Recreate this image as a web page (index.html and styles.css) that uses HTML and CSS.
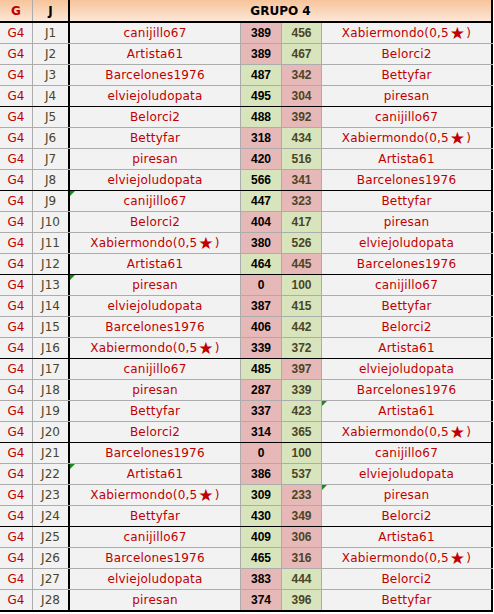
FILE: index.html
```html
<!DOCTYPE html>
<html>
<head>
<meta charset="utf-8">
<link rel="stylesheet" href="styles.css">
</head>
<body>
<div class="sheet">
  <div class="row head">
    <div class="c g hg">G</div>
    <div class="c j hj">J</div>
    <div class="c title">GRUPO 4</div>
  </div>

  <div class="row"><div class="c g">G4</div><div class="c j">J1</div><div class="c p">canijillo67</div><div class="c s1 lo">389</div><div class="c s2 hi">456</div><div class="c p2">Xabiermondo(0,5<span class="star">★</span>)</div></div>
  <div class="row"><div class="c g">G4</div><div class="c j">J2</div><div class="c p">Artista61</div><div class="c s1 lo">389</div><div class="c s2 hi">467</div><div class="c p2">Belorci2</div></div>
  <div class="row"><div class="c g">G4</div><div class="c j">J3</div><div class="c p">Barcelones1976</div><div class="c s1 hi">487</div><div class="c s2 lo">342</div><div class="c p2">Bettyfar</div></div>
  <div class="row end"><div class="c g">G4</div><div class="c j">J4</div><div class="c p">elviejoludopata</div><div class="c s1 hi">495</div><div class="c s2 lo">304</div><div class="c p2">piresan</div></div>

  <div class="row"><div class="c g">G4</div><div class="c j">J5</div><div class="c p">Belorci2</div><div class="c s1 hi">488</div><div class="c s2 lo">392</div><div class="c p2">canijillo67</div></div>
  <div class="row"><div class="c g">G4</div><div class="c j">J6</div><div class="c p">Bettyfar</div><div class="c s1 lo">318</div><div class="c s2 hi">434</div><div class="c p2">Xabiermondo(0,5<span class="star">★</span>)</div></div>
  <div class="row"><div class="c g">G4</div><div class="c j">J7</div><div class="c p">piresan</div><div class="c s1 lo">420</div><div class="c s2 hi">516</div><div class="c p2">Artista61</div></div>
  <div class="row end"><div class="c g">G4</div><div class="c j">J8</div><div class="c p">elviejoludopata</div><div class="c s1 hi">566</div><div class="c s2 lo">341</div><div class="c p2">Barcelones1976</div></div>

  <div class="row"><div class="c g">G4</div><div class="c j">J9</div><div class="c p mark">canijillo67</div><div class="c s1 hi">447</div><div class="c s2 lo">323</div><div class="c p2">Bettyfar</div></div>
  <div class="row"><div class="c g">G4</div><div class="c j">J10</div><div class="c p">Belorci2</div><div class="c s1 lo">404</div><div class="c s2 hi">417</div><div class="c p2">piresan</div></div>
  <div class="row"><div class="c g">G4</div><div class="c j">J11</div><div class="c p">Xabiermondo(0,5<span class="star">★</span>)</div><div class="c s1 lo">380</div><div class="c s2 hi">526</div><div class="c p2">elviejoludopata</div></div>
  <div class="row end"><div class="c g">G4</div><div class="c j">J12</div><div class="c p">Artista61</div><div class="c s1 hi">464</div><div class="c s2 lo">445</div><div class="c p2">Barcelones1976</div></div>

  <div class="row"><div class="c g">G4</div><div class="c j">J13</div><div class="c p mark">piresan</div><div class="c s1 lo">0</div><div class="c s2 hi">100</div><div class="c p2">canijillo67</div></div>
  <div class="row"><div class="c g">G4</div><div class="c j">J14</div><div class="c p">elviejoludopata</div><div class="c s1 lo">387</div><div class="c s2 hi">415</div><div class="c p2">Bettyfar</div></div>
  <div class="row"><div class="c g">G4</div><div class="c j">J15</div><div class="c p">Barcelones1976</div><div class="c s1 lo">406</div><div class="c s2 hi">442</div><div class="c p2">Belorci2</div></div>
  <div class="row end"><div class="c g">G4</div><div class="c j">J16</div><div class="c p">Xabiermondo(0,5<span class="star">★</span>)</div><div class="c s1 lo">339</div><div class="c s2 hi">372</div><div class="c p2">Artista61</div></div>

  <div class="row"><div class="c g">G4</div><div class="c j">J17</div><div class="c p">canijillo67</div><div class="c s1 hi">485</div><div class="c s2 lo">397</div><div class="c p2">elviejoludopata</div></div>
  <div class="row"><div class="c g">G4</div><div class="c j">J18</div><div class="c p">piresan</div><div class="c s1 lo">287</div><div class="c s2 hi">339</div><div class="c p2">Barcelones1976</div></div>
  <div class="row"><div class="c g">G4</div><div class="c j">J19</div><div class="c p">Bettyfar</div><div class="c s1 lo">337</div><div class="c s2 hi">423</div><div class="c p2 mark">Artista61</div></div>
  <div class="row end"><div class="c g">G4</div><div class="c j">J20</div><div class="c p">Belorci2</div><div class="c s1 lo">314</div><div class="c s2 hi">365</div><div class="c p2">Xabiermondo(0,5<span class="star">★</span>)</div></div>

  <div class="row"><div class="c g">G4</div><div class="c j">J21</div><div class="c p">Barcelones1976</div><div class="c s1 lo">0</div><div class="c s2 hi">100</div><div class="c p2">canijillo67</div></div>
  <div class="row"><div class="c g">G4</div><div class="c j">J22</div><div class="c p mark">Artista61</div><div class="c s1 lo">386</div><div class="c s2 hi">537</div><div class="c p2">elviejoludopata</div></div>
  <div class="row"><div class="c g">G4</div><div class="c j">J23</div><div class="c p">Xabiermondo(0,5<span class="star">★</span>)</div><div class="c s1 hi">309</div><div class="c s2 lo">233</div><div class="c p2 mark">piresan</div></div>
  <div class="row end"><div class="c g">G4</div><div class="c j">J24</div><div class="c p">Bettyfar</div><div class="c s1 hi">430</div><div class="c s2 lo">349</div><div class="c p2">Belorci2</div></div>

  <div class="row"><div class="c g">G4</div><div class="c j">J25</div><div class="c p">canijillo67</div><div class="c s1 hi">409</div><div class="c s2 lo">306</div><div class="c p2">Artista61</div></div>
  <div class="row"><div class="c g">G4</div><div class="c j">J26</div><div class="c p">Barcelones1976</div><div class="c s1 hi">465</div><div class="c s2 lo">316</div><div class="c p2">Xabiermondo(0,5<span class="star">★</span>)</div></div>
  <div class="row"><div class="c g">G4</div><div class="c j">J27</div><div class="c p">elviejoludopata</div><div class="c s1 lo">383</div><div class="c s2 hi">444</div><div class="c p2">Belorci2</div></div>
  <div class="row last"><div class="c g">G4</div><div class="c j">J28</div><div class="c p">piresan</div><div class="c s1 lo">374</div><div class="c s2 hi">396</div><div class="c p2">Bettyfar</div></div>
</div>
</body>
</html>
```

FILE: styles.css
```css
html, body {
  margin: 0;
  padding: 0;
  background: #ffffff;
}

.sheet {
  width: 493px;
  font-family: "DejaVu Sans", Verdana, sans-serif;
  font-size: 12px;
}

.row {
  display: grid;
  grid-template-columns: 33px 37px 171px 41px 40px 171px;
  height: 21px;
  box-sizing: border-box;
  border-bottom: 1px solid #acacac;
}

.row.end {
  border-bottom-color: #000000;
}

.row.last {
  height: 22px;
  border-bottom: 2px solid #000000;
}

.row.head {
  grid-template-columns: 33px 37px 423px;
  height: 23px;
  border-bottom: 2px solid #000000;
  background: linear-gradient(#f7c49b, #fce6d6);
}

.c {
  position: relative;
  box-sizing: border-box;
  display: flex;
  align-items: center;
  justify-content: center;
  border-right: 1px solid #acacac;
  background: #f2f2f2;
  white-space: nowrap;
  line-height: 1;
}

.head .c {
  background: transparent;
  font-weight: bold;
  color: #000000;
}

.head .hg {
  color: #c00000;
}

.head .title {
  border-right: 2px solid #000000;
}

.g {
  color: #c00000;
}

.j {
  color: #4a4528;
  border-right: 2px solid #000000;
}

.p, .p2 {
  color: #c00000;
  letter-spacing: 0.2px;
}

.p2 {
  border-right: 2px solid #000000;
}

.s1, .s2 {
  font-family: "Liberation Sans", Arial, sans-serif;
  font-weight: bold;
  font-size: 12px;
}

.s1 {
  color: #000000;
}

.s2 {
  color: #4a4528;
}

.hi {
  background: #d8e4bc;
}

.lo {
  background: #e6b8b7;
}

.star {
  font-size: 17px;
  color: #c00000;
  margin: 0 1px;
}

.mark::before {
  content: "";
  position: absolute;
  left: 0;
  top: 0;
  border-top: 5px solid #1a8a1a;
  border-right: 5px solid transparent;
}
```
